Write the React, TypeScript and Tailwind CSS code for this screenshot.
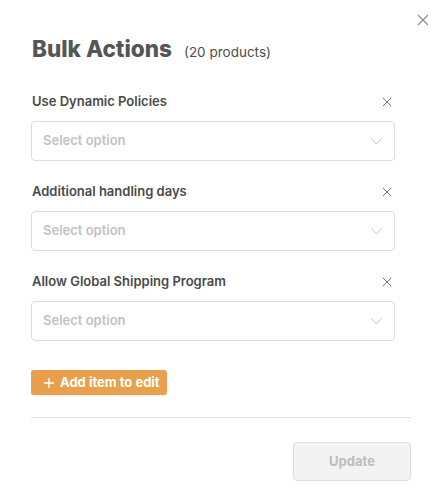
import React from 'react';

const fields = ['Use Dynamic Policies', 'Additional handling days', 'Allow Global Shipping Program'];

const XIcon: React.FC<{ size: number; className?: string }> = ({ size, className }) => (
  <svg width={size} height={size} viewBox="0 0 12 12" className={className} fill="none" stroke="currentColor" strokeWidth={1.1}>
    <path d="M1 1L11 11M11 1L1 11" />
  </svg>
);

const App: React.FC = () => {
  return (
    <div className="w-[442px] h-[496px] bg-white relative font-['Inter',sans-serif] text-[#4a4a4a]">
      <button className="absolute left-[417px] top-[14px] text-[#8a8a8a]">
        <XIcon size={12} />
      </button>

      <div className="pl-[31px] pr-[31px] pt-[35px]">
        <div className="flex items-baseline gap-[12px] h-[28px]">
          <h1 className="text-[22.5px] leading-[28px] font-extrabold text-[#555555] pl-[1px]">Bulk Actions</h1>
          <span className="text-[13.5px] text-[#4d4d4d]">(20 products)</span>
        </div>

        <div className="mt-[30px] flex flex-col gap-[22px] pr-[16px]">
          {fields.map(f => (
            <div key={f}>
              <div className="flex items-center justify-between h-[16px] pl-[1px]">
                <span className="text-[13px] leading-[16px] font-semibold text-[#4a4a4a]">{f}</span>
                <span className="text-[#666666] mr-[3px] mt-[1px]">
                  <XIcon size={10} />
                </span>
              </div>
              <div className="mt-[12px] h-[40px] border border-[#dcdcdc] rounded-[4px] flex items-center justify-between pl-[11px] pr-[12px]">
                <span className="text-[13px] font-semibold text-[#c2c2c2]">Select option</span>
                <svg width="11" height="7" viewBox="0 0 11 7" fill="none" stroke="#c4c4c4" strokeWidth={1}>
                  <path d="M0.5 0.5L5.5 6L10.5 0.5" />
                </svg>
              </div>
            </div>
          ))}
        </div>

        <button className="mt-[29px] h-[25px] w-[136px] rounded-[3px] bg-[#e8a04c] text-white text-[13px] font-bold flex items-center pl-[13px] gap-[6px] shadow-[0_1px_2px_rgba(0,0,0,0.08)]">
          <svg width="10" height="10" viewBox="0 0 10 10" stroke="white" strokeWidth={1.4}>
            <path d="M5 0V10M0 5H10" />
          </svg>
          Add item to edit
        </button>

        <div className="mt-[22px] border-t border-[#e2e2e2]" />

        <div className="mt-[24px] flex justify-end">
          <button className="w-[118px] h-[39px] rounded-[4px] bg-[#f3f3f3] border border-[#dedede] text-[13px] font-bold text-[#bdbdbd]">
            Update
          </button>
        </div>
      </div>
    </div>
  );
};

export default App;
